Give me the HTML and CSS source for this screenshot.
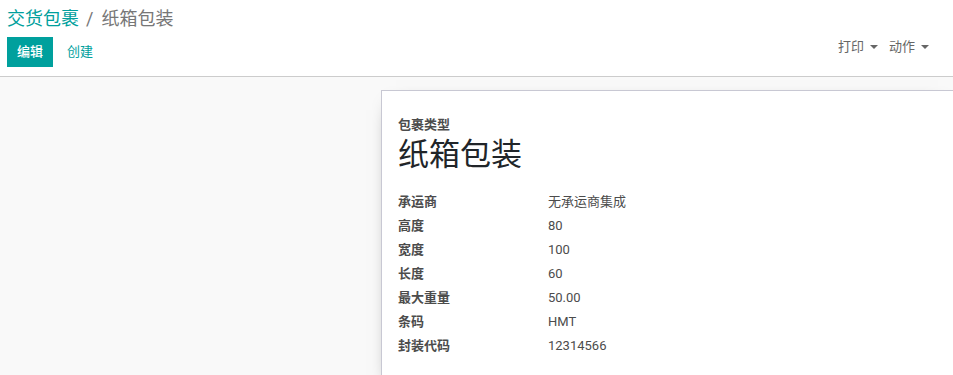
FILE: index.html
```html
<!DOCTYPE html>
<html lang="zh">
<head>
<meta charset="utf-8">
<title>纸箱包装</title>
<link rel="stylesheet" href="styles.css">
</head>
<body>
<div class="control-panel">
  <ol class="breadcrumb">
    <li class="crumb-link">交货包裹</li>
    <li class="crumb-sep">/</li>
    <li class="crumb-active">纸箱包装</li>
  </ol>
  <div class="cp-bottom">
    <div class="cp-left">
      <button class="btn-primary">编辑</button>
      <button class="btn-link">创建</button>
    </div>
    <div class="cp-right">
      <span class="dropdown">打印 <span class="caret"></span></span>
      <span class="dropdown">动作 <span class="caret"></span></span>
    </div>
  </div>
</div>
<div class="form-view">
  <div class="sheet">
    <div class="field-label-top">包裹类型</div>
    <h1 class="title">纸箱包装</h1>
    <table class="fields">
      <tr><th>承运商</th><td>无承运商集成</td></tr>
      <tr><th>高度</th><td>80</td></tr>
      <tr><th>宽度</th><td>100</td></tr>
      <tr><th>长度</th><td>60</td></tr>
      <tr><th>最大重量</th><td>50.00</td></tr>
      <tr><th>条码</th><td>HMT</td></tr>
      <tr><th>封装代码</th><td>12314566</td></tr>
    </table>
  </div>
</div>
</body>
</html>
```
FILE: styles.css
```css
* { box-sizing: border-box; }
html, body {
  margin: 0;
  padding: 0;
  height: 100%;
}
body {
  font-family: Roboto, "Noto Sans CJK SC", sans-serif;
  font-size: 13px;
  color: #4c4c4c;
  background: #f9f9f9;
  overflow: hidden;
}
.control-panel {
  height: 77px;
  background: #fff;
  border-bottom: 1px solid #ccc;
  padding: 6px 16px 0 7px;
}
.breadcrumb {
  list-style: none;
  margin: 0;
  padding: 0;
  display: flex;
  font-size: 18px;
  line-height: 26px;
  height: 26px;
}
.crumb-link { color: #00a09d; }
.crumb-sep { color: #777; padding: 0 8px 0 7px; }
.crumb-active { color: #777; }
.cp-bottom {
  margin-top: 5px;
  display: flex;
  justify-content: space-between;
  align-items: flex-start;
}
.cp-left { display: flex; align-items: center; }
.btn-primary {
  font-family: inherit;
  font-size: 13px;
  font-weight: 500;
  color: #fff;
  background: #00a09d;
  border: 0;
  height: 30px;
  width: 46px;
  padding: 0;
  line-height: 30px;
}
.btn-link {
  font-family: inherit;
  font-size: 13px;
  color: #00a09d;
  background: transparent;
  border: 0;
  height: 30px;
  padding: 0 0 0 14px;
  line-height: 30px;
}
.cp-right {
  display: flex;
  gap: 11px;
  padding-top: 1px;
  padding-right: 8px;
  line-height: 18px;
  color: #666;
}
.dropdown { display: inline-flex; align-items: center; }
.caret {
  display: inline-block;
  width: 0;
  height: 0;
  margin-left: 6px;
  border-left: 4px solid transparent;
  border-right: 4px solid transparent;
  border-top: 4px solid #666;
}
.form-view {
  padding: 13px 0 0 381px;
}
.sheet {
  background: #fff;
  border: 1px solid #c8c8d3;
  border-right: 0;
  box-shadow: 0 5px 20px -15px #000;
  min-height: 300px;
  padding: 25px 0 0 16px;
}
.field-label-top {
  font-weight: 700;
  font-size: 13px;
  line-height: 18px;
  color: #4c4c4c;
}
.title {
  margin: 1px 0 15px 0;
  font-size: 31px;
  font-weight: 400;
  line-height: 40px;
  color: #212529;
}
.fields {
  border-collapse: collapse;
}
.fields th {
  width: 150px;
  text-align: left;
  font-weight: 700;
  padding: 0;
  height: 24px;
  line-height: 24px;
  color: #4c4c4c;
}
.fields td {
  padding: 0;
  height: 24px;
  line-height: 24px;
  color: #4c4c4c;
}
```
